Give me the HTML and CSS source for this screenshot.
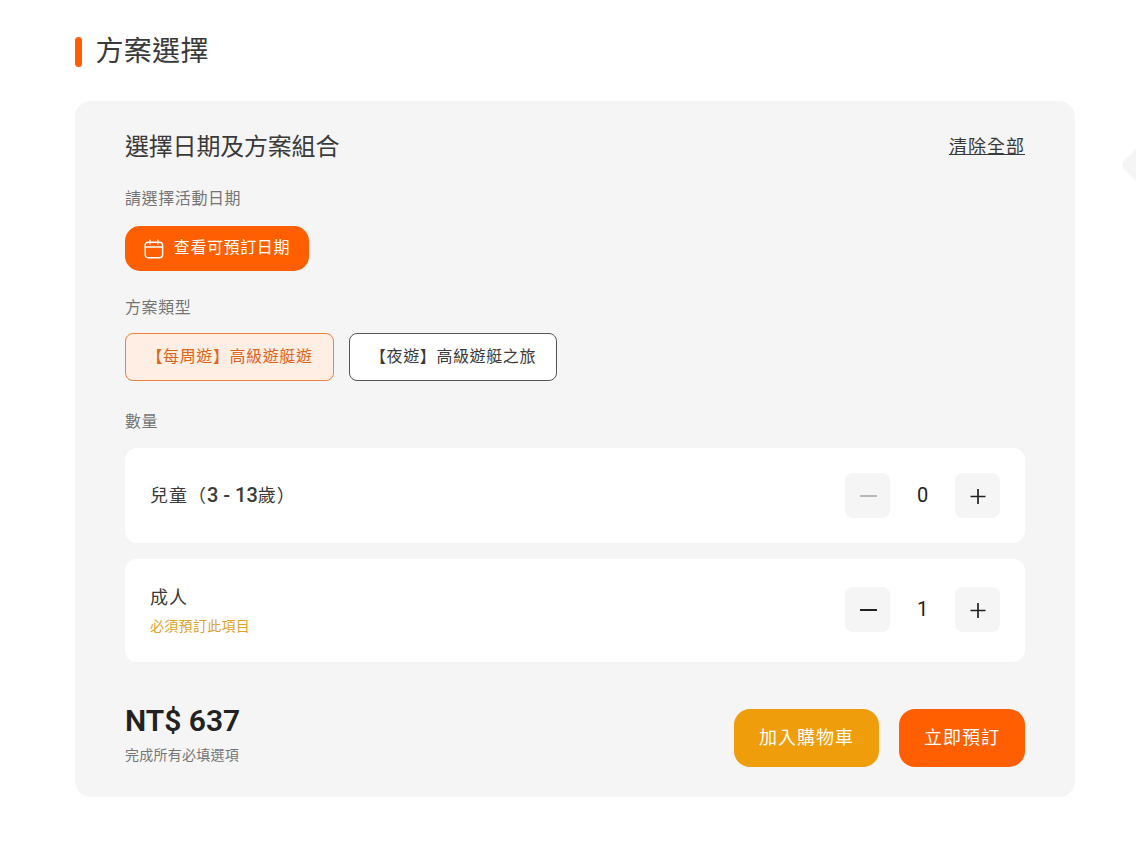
FILE: index.html
```html
<!DOCTYPE html>
<html lang="zh-Hant">
<head>
<meta charset="utf-8">
<title>方案選擇</title>
<link rel="stylesheet" href="styles.css">
</head>
<body>
<div class="sideArrow"></div>
<div class="page">
  <h2 class="sectionTitle"><span class="titleBar"></span>方案選擇</h2>

  <div class="planCard">
    <div class="planHead">
      <h3>選擇日期及方案組合</h3>
      <a class="clearAll" href="#">清除全部</a>
    </div>

    <p class="fieldLabel dateLabel">請選擇活動日期</p>
    <button class="dateButton">
      <svg width="20" height="20" viewBox="0 0 20 20" fill="none" stroke="#fff" stroke-width="1.4" stroke-linecap="round">
        <rect x="1.2" y="3.2" width="17.6" height="15.6" rx="3"/>
        <path d="M1.2 8h17.6M6 1v4M14 1v4"/>
      </svg>
      <span class="dateText">查看可預訂日期</span>
    </button>

    <p class="fieldLabel typeLabel">方案類型</p>
    <div class="optionList">
      <button class="option selected">【每周遊】高級遊艇遊</button>
      <button class="option">【夜遊】高級遊艇之旅</button>
    </div>

    <p class="fieldLabel qtyLabel">數量</p>
    <div class="qtyRow">
      <div class="qtyName">兒童（<span class="ageNum">3 - 13</span>歲）</div>
      <div class="stepper">
        <button class="stepButton disabled"><svg width="20" height="20" viewBox="0 0 20 20"><path d="M2 10h17" stroke="#b9b9b9" stroke-width="2"/></svg></button>
        <span class="count">0</span>
        <button class="stepButton"><svg width="20" height="20" viewBox="0 0 20 20"><path d="M2.5 10.5h15M10 3v15" stroke="#222" stroke-width="1.7"/></svg></button>
      </div>
    </div>
    <div class="qtyRow adultRow">
      <div>
        <div class="qtyName">成人</div>
        <div class="required">必須預訂此項目</div>
      </div>
      <div class="stepper">
        <button class="stepButton"><svg width="20" height="20" viewBox="0 0 20 20"><path d="M2 10h17" stroke="#222" stroke-width="2"/></svg></button>
        <span class="count">1</span>
        <button class="stepButton"><svg width="20" height="20" viewBox="0 0 20 20"><path d="M2.5 10.5h15M10 3v15" stroke="#222" stroke-width="1.7"/></svg></button>
      </div>
    </div>

    <div class="planFoot">
      <div>
        <div class="price">NT$ 637</div>
        <div class="priceNote">完成所有必填選項</div>
      </div>
      <div class="actions">
        <button class="bigButton cart">加入購物車</button>
        <button class="bigButton book">立即預訂</button>
      </div>
    </div>
  </div>
</div>
</body>
</html>
```

FILE: styles.css
```css
* {
  box-sizing: border-box;
}

body {
  margin: 0;
  background-color: #fff;
  color: #3a3a3a;
  font-family: Roboto, "Noto Sans CJK TC", sans-serif;
  overflow: hidden;
}

button {
  font-family: inherit;
  border: none;
  cursor: pointer;
}

.page {
  width: 1000px;
  margin-left: 75px;
  padding-top: 31px;
}

.sectionTitle {
  display: flex;
  align-items: center;
  height: 42px;
  margin: 0 0 28px 0;
  font-size: 28px;
  font-weight: 400;
  line-height: 42px;
  letter-spacing: 0.3px;
}

.titleBar {
  width: 7px;
  height: 30px;
  margin-right: 13.5px;
  border-radius: 4px;
  background-color: #ff5f00;
}

.planCard {
  height: 696px;
  padding: 30px 50px;
  border-radius: 16px;
  background-color: #f5f5f5;
}

.planHead {
  display: flex;
  justify-content: space-between;
  align-items: center;
  height: 30px;
}

.planHead h3 {
  margin: 0 0 4px 0;
  font-size: 24px;
  font-weight: 400;
  letter-spacing: -0.2px;
}

.clearAll {
  margin-bottom: 2px;
  color: #3a3a3a;
  font-size: 18px;
  letter-spacing: 1px;
}

.fieldLabel {
  margin: 0;
  color: #757575;
  font-size: 16px;
  line-height: 24px;
  letter-spacing: 0.6px;
}

.dateLabel {
  margin-top: 26px;
}

.dateButton {
  display: flex;
  align-items: center;
  gap: 10px;
  width: 184px;
  height: 45px;
  margin-top: 15px;
  padding: 0 19px;
  border-radius: 15px;
  background-color: #ff5f00;
  color: #fff;
  font-size: 16px;
  letter-spacing: 0.6px;
  white-space: nowrap;
}

.dateText {
  margin-bottom: 6px;
}

.typeLabel {
  margin-top: 25px;
}

.optionList {
  display: flex;
  gap: 15px;
  margin-top: 13px;
}

.option {
  width: 208px;
  height: 48px;
  padding: 0 0 4px 0;
  border: 1px solid #555;
  border-radius: 8px;
  background-color: #fff;
  color: #3a3a3a;
  font-size: 16px;
  letter-spacing: 0.6px;
}

.option.selected {
  width: 209px;
  border: 1.5px solid #ec813f;
  background-color: #ffeee3;
  color: #e0651c;
}

.qtyLabel {
  margin-top: 29px;
}

.qtyRow {
  display: flex;
  justify-content: space-between;
  align-items: center;
  height: 95px;
  margin-top: 14px;
  padding: 0 25px;
  border-radius: 12px;
  background-color: #fff;
}

.adultRow {
  height: 103px;
  margin-top: 16px;
}

.adultRow .stepper {
  margin-bottom: 2px;
}

.qtyName {
  font-size: 18px;
  line-height: 26px;
  letter-spacing: 1px;
}

.ageNum {
  font-weight: 500;
  font-size: 20px;
  letter-spacing: 0;
}

.required {
  margin-top: 5px;
  color: #e0a42a;
  font-size: 14px;
  line-height: 20px;
  letter-spacing: 0.3px;
}

.stepper {
  display: flex;
  align-items: center;
}

.stepButton {
  display: flex;
  justify-content: center;
  align-items: center;
  width: 45px;
  height: 45px;
  padding: 0;
  border-radius: 8px;
  background-color: #f5f5f5;
}

.count {
  width: 65px;
  margin-bottom: 2px;
  color: #222;
  font-size: 20px;
  font-weight: 400;
  text-align: center;
}

.planFoot {
  display: flex;
  justify-content: space-between;
  margin-top: 41px;
}

.price {
  color: #222;
  font-size: 30px;
  font-weight: 600;
  line-height: 36px;
}

.priceNote {
  margin-top: 6px;
  color: #757575;
  font-size: 14px;
  line-height: 20px;
  letter-spacing: 0.25px;
}

.actions {
  display: flex;
  gap: 20px;
  margin-top: 6px;
}

.bigButton {
  height: 58px;
  padding: 0 0 4px 0;
  border-radius: 16px;
  color: #fff;
  font-size: 18px;
  letter-spacing: 1px;
}

.cart {
  width: 145px;
  background-color: #f09d0b;
}

.book {
  width: 126px;
  background-color: #ff5f00;
}

.sideArrow {
  position: absolute;
  top: 143px;
  left: 1129px;
  width: 44px;
  height: 44px;
  background-color: #f5f5f5;
  transform: rotate(45deg);
  border-radius: 6px;
}
```
